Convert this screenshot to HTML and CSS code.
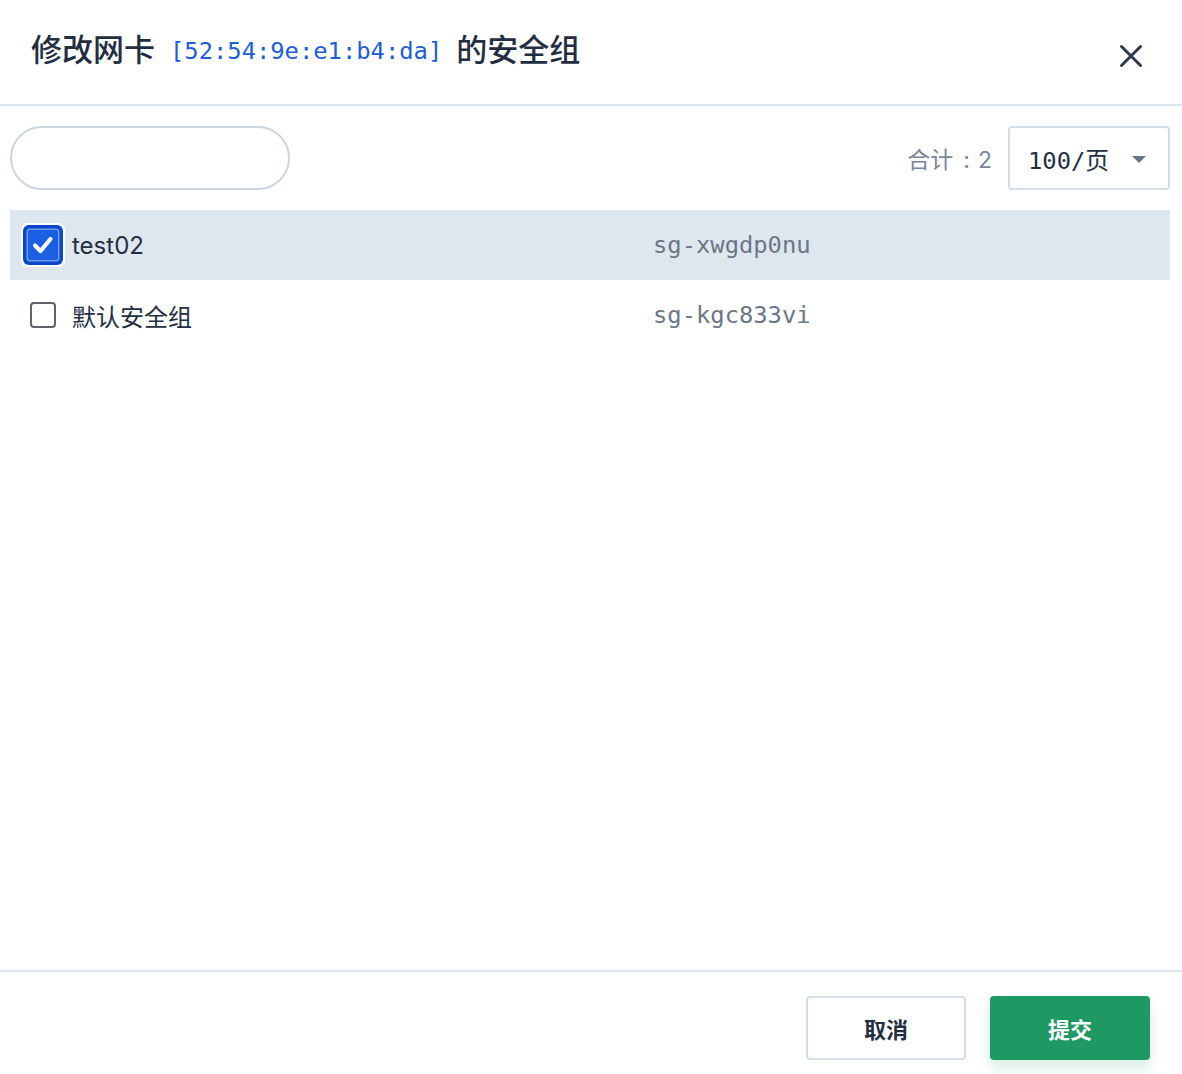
FILE: index.html
```html
<!DOCTYPE html>
<html lang="zh-CN">
<head>
<meta charset="utf-8">
<title>修改网卡的安全组</title>
<link rel="stylesheet" href="styles.css">
</head>
<body>
<div class="dialog">
  <header class="header">
    <h1 class="title">修改网卡<span class="mac">[52:54:9e:e1:b4:da]</span>的安全组</h1>
    <button class="close" aria-label="关闭">
      <svg width="24" height="24" viewBox="0 0 24 24"><path d="M2.5 2.5 L21.5 21.5 M21.5 2.5 L2.5 21.5" stroke="#2c3a4e" stroke-width="3" stroke-linecap="round" fill="none"/></svg>
    </button>
  </header>
  <main class="body">
    <div class="toolbar">
      <input class="search" type="text">
      <div class="pager">
        <span class="total">合计<span class="colon">:</span>2</span>
        <div class="select">
          <span class="select-value">100/页</span>
          <span class="caret"></span>
        </div>
      </div>
    </div>
    <div class="list">
      <div class="row selected">
        <div class="cell name"><span class="cb checked"><svg width="26" height="26" viewBox="0 0 26 26"><path d="M5 13.5 L10.5 19 L20.5 7" stroke="#fff" stroke-width="4.2" stroke-linecap="round" stroke-linejoin="round" fill="none"/></svg></span><span>test02</span></div>
        <div class="cell id">sg-xwgdp0nu</div>
      </div>
      <div class="row">
        <div class="cell name"><span class="cb"></span><span>默认安全组</span></div>
        <div class="cell id">sg-kgc833vi</div>
      </div>
    </div>
  </main>
  <footer class="footer">
    <button class="btn btn-default">取消</button>
    <button class="btn btn-primary">提交</button>
  </footer>
</div>
</body>
</html>
```
FILE: styles.css
```css
html, body {
  margin: 0;
  padding: 0;
  height: 100%;
  background: #fff;
}
body {
  font-family: "Inter", "Noto Sans CJK SC", sans-serif;
  color: #242e42;
}
.dialog {
  height: 100vh;
  display: flex;
  flex-direction: column;
}
.header {
  height: 104px;
  border-bottom: 2px solid #dde5ee;
  display: flex;
  align-items: center;
  justify-content: space-between;
  padding: 0 39px 0 31px;
  flex: none;
}
.title {
  margin: 0 0 4px 0;
  font-family: "Noto Sans CJK SC", sans-serif;
  font-size: 31px;
  font-weight: 500;
  color: #242e42;
  line-height: 40px;
}
.mac {
  font-family: "DejaVu Sans Mono", monospace;
  font-size: 23.8px;
  font-weight: 400;
  color: #1d5ed6;
  position: relative;
  top: -2px;
  margin: 0 14px 0 15px;
}
.close {
  border: 0;
  background: none;
  padding: 0;
  margin-top: 8px;
  width: 24px;
  height: 24px;
  display: flex;
}
.body {
  flex: 1;
  padding: 20px 12px 0 10px;
}
.toolbar {
  display: flex;
  align-items: center;
  justify-content: space-between;
  margin-bottom: 20px;
}
.search {
  width: 280px;
  height: 64px;
  box-sizing: border-box;
  border: 2px solid #ccd6e2;
  border-radius: 32px;
  outline: none;
  margin: 0;
  padding: 0 24px;
}
.pager {
  display: flex;
  align-items: center;
  gap: 16px;
}
.total {
  font-family: "Inter", "Noto Sans CJK SC", sans-serif;
  font-size: 23px;
  color: #79879c;
}
.colon {
  margin: 0 8px 0 10px;
}
.select {
  width: 162px;
  height: 64px;
  box-sizing: border-box;
  border: 2px solid #d5dee7;
  border-radius: 4px;
  display: flex;
  align-items: center;
  justify-content: space-between;
  padding: 0 22px 0 18px;
}
.select-value {
  font-family: "DejaVu Sans Mono", "Noto Sans CJK SC", monospace;
  font-size: 23.8px;
  color: #242e42;
}
.caret {
  width: 0;
  height: 0;
  border-left: 7px solid transparent;
  border-right: 7px solid transparent;
  border-top: 7px solid #6a7686;
  margin-top: 2px;
}
.list {
  display: flex;
  flex-direction: column;
}
.row {
  height: 70px;
  display: grid;
  grid-template-columns: 643px 1fr;
  align-items: center;
}
.row.selected {
  background: #dee6ee;
}
.cell.name {
  display: flex;
  align-items: center;
  gap: 16px;
  padding-left: 20px;
  font-size: 24px;
  color: #242e42;
}
.cb {
  width: 26px;
  height: 26px;
  box-sizing: border-box;
  border: 2px solid #606468;
  border-radius: 4px;
  background: #fff;
  display: flex;
  align-items: center;
  justify-content: center;
}
.cb.checked {
  width: 30px;
  height: 30px;
  margin: 0 -2px;
  border: 0;
  border-radius: 2px;
  background: #1d5fe2;
  box-shadow: 0 0 0 1.5px #6f9bf2, 0 0 0 5px #0b47c8, 0 0 0 7px #fff;
}
.cell.id {
  font-family: "DejaVu Sans Mono", monospace;
  font-size: 23.8px;
  color: #6b7787;
}
.footer {
  flex: none;
  height: 104px;
  border-top: 2px solid #dde5ee;
  display: flex;
  justify-content: flex-end;
  align-items: flex-start;
  gap: 24px;
  padding: 24px 32px 0 0;
  box-sizing: border-box;
}
.btn {
  width: 160px;
  height: 64px;
  box-sizing: border-box;
  border-radius: 4px;
  font-family: "Noto Sans CJK SC", sans-serif;
  font-size: 22px;
  font-weight: 600;
  margin: 0;
}
.btn-default {
  background: #fff;
  border: 2px solid #d5dee7;
  color: #242e42;
}
.btn-primary {
  background: #1e9963;
  border: 0;
  color: #fff;
  box-shadow: 0 8px 14px rgba(30, 153, 99, 0.18);
}
```
